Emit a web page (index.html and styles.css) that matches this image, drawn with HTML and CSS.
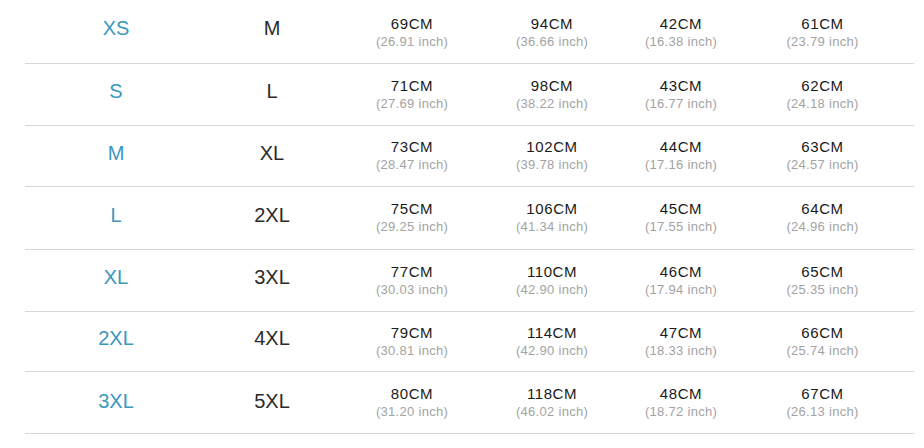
FILE: index.html
```html
<!DOCTYPE html>
<html>
<head>
<meta charset="utf-8">
<link rel="stylesheet" href="styles.css">
</head>
<body>
<div class="chart">
  <div class="row">
    <div class="cell size">XS</div><div class="cell alt">M</div>
    <div class="cell m"><span class="cm">69CM</span><span class="in">(26.91 inch)</span></div>
    <div class="cell m"><span class="cm">94CM</span><span class="in">(36.66 inch)</span></div>
    <div class="cell m"><span class="cm">42CM</span><span class="in">(16.38 inch)</span></div>
    <div class="cell m last"><span class="cm">61CM</span><span class="in">(23.79 inch)</span></div>
  </div>
  <div class="row">
    <div class="cell size">S</div><div class="cell alt">L</div>
    <div class="cell m"><span class="cm">71CM</span><span class="in">(27.69 inch)</span></div>
    <div class="cell m"><span class="cm">98CM</span><span class="in">(38.22 inch)</span></div>
    <div class="cell m"><span class="cm">43CM</span><span class="in">(16.77 inch)</span></div>
    <div class="cell m last"><span class="cm">62CM</span><span class="in">(24.18 inch)</span></div>
  </div>
  <div class="row">
    <div class="cell size">M</div><div class="cell alt">XL</div>
    <div class="cell m"><span class="cm">73CM</span><span class="in">(28.47 inch)</span></div>
    <div class="cell m"><span class="cm">102CM</span><span class="in">(39.78 inch)</span></div>
    <div class="cell m"><span class="cm">44CM</span><span class="in">(17.16 inch)</span></div>
    <div class="cell m last"><span class="cm">63CM</span><span class="in">(24.57 inch)</span></div>
  </div>
  <div class="row">
    <div class="cell size">L</div><div class="cell alt">2XL</div>
    <div class="cell m"><span class="cm">75CM</span><span class="in">(29.25 inch)</span></div>
    <div class="cell m"><span class="cm">106CM</span><span class="in">(41.34 inch)</span></div>
    <div class="cell m"><span class="cm">45CM</span><span class="in">(17.55 inch)</span></div>
    <div class="cell m last"><span class="cm">64CM</span><span class="in">(24.96 inch)</span></div>
  </div>
  <div class="row">
    <div class="cell size">XL</div><div class="cell alt">3XL</div>
    <div class="cell m"><span class="cm">77CM</span><span class="in">(30.03 inch)</span></div>
    <div class="cell m"><span class="cm">110CM</span><span class="in">(42.90 inch)</span></div>
    <div class="cell m"><span class="cm">46CM</span><span class="in">(17.94 inch)</span></div>
    <div class="cell m last"><span class="cm">65CM</span><span class="in">(25.35 inch)</span></div>
  </div>
  <div class="row">
    <div class="cell size">2XL</div><div class="cell alt">4XL</div>
    <div class="cell m"><span class="cm">79CM</span><span class="in">(30.81 inch)</span></div>
    <div class="cell m"><span class="cm">114CM</span><span class="in">(42.90 inch)</span></div>
    <div class="cell m"><span class="cm">47CM</span><span class="in">(18.33 inch)</span></div>
    <div class="cell m last"><span class="cm">66CM</span><span class="in">(25.74 inch)</span></div>
  </div>
  <div class="row">
    <div class="cell size">3XL</div><div class="cell alt">5XL</div>
    <div class="cell m"><span class="cm">80CM</span><span class="in">(31.20 inch)</span></div>
    <div class="cell m"><span class="cm">118CM</span><span class="in">(46.02 inch)</span></div>
    <div class="cell m"><span class="cm">48CM</span><span class="in">(18.72 inch)</span></div>
    <div class="cell m last"><span class="cm">67CM</span><span class="in">(26.13 inch)</span></div>
  </div>
</div>
</body>
</html>
```
FILE: styles.css
```css
html, body {
  margin: 0;
  padding: 0;
  background: #ffffff;
}
body {
  font-family: "Liberation Sans", Arial, sans-serif;
}
.chart {
  margin-left: 25px;
  width: 889px;
}
.row {
  display: grid;
  grid-template-columns: 182px 130px 150px 130px 128px 169px;
  border-bottom: 1px solid #d6d6d6;
  height: 61px;
}
.row:nth-child(1) { height: 63px; }
.row:nth-child(2) { height: 61px; }
.row:nth-child(3) { height: 60px; }
.row:nth-child(4) { height: 62px; }
.row:nth-child(5) { height: 61px; }
.row:nth-child(6) { height: 59px; }
.row:nth-child(7) { height: 61px; }
.cell {
  display: flex;
  flex-direction: column;
  align-items: center;
  justify-content: center;
  text-align: center;
}
.size,
.alt {
  font-size: 20px;
  padding-bottom: 6px;
}
.row:nth-child(7) .size,
.row:nth-child(7) .alt {
  padding-bottom: 3px;
}
.size {
  color: #3a98bd;
}
.alt {
  color: #2b2b2b;
}
.row:nth-child(1) .m {
  padding-top: 2px;
}
.last {
  padding-right: 14px;
}
.cm {
  font-size: 15px;
  line-height: 18px;
  letter-spacing: 0.6px;
  color: #1a1a1a;
}
.in {
  font-size: 13px;
  line-height: 18px;
  letter-spacing: 0.3px;
  color: #a3a3a3;
}
```
